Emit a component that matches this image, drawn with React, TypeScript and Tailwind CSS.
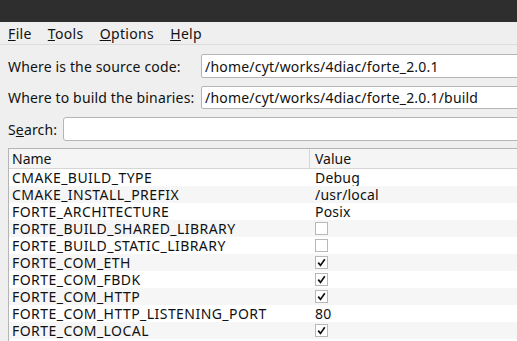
import React from "react";

const rows: { name: string; value: string | boolean }[] = [
  { name: "CMAKE_BUILD_TYPE", value: "Debug" },
  { name: "CMAKE_INSTALL_PREFIX", value: "/usr/local" },
  { name: "FORTE_ARCHITECTURE", value: "Posix" },
  { name: "FORTE_BUILD_SHARED_LIBRARY", value: false },
  { name: "FORTE_BUILD_STATIC_LIBRARY", value: false },
  { name: "FORTE_COM_ETH", value: true },
  { name: "FORTE_COM_FBDK", value: true },
  { name: "FORTE_COM_HTTP", value: true },
  { name: "FORTE_COM_HTTP_LISTENING_PORT", value: "80" },
  { name: "FORTE_COM_LOCAL", value: true },
  { name: "FORTE_COM_OPC", value: true },
];

function Check({ on }: { on: boolean }) {
  return (
    <div className="w-[13px] h-[13px] border border-[#b8b8b8] bg-white flex items-center justify-center">
      {on && (
        <svg width="9" height="9" viewBox="0 0 9 9">
          <path d="M1.2 4.6 L3.5 7.4 L7.8 1.2" fill="none" stroke="#111" strokeWidth="1.7" />
        </svg>
      )}
    </div>
  );
}

export default function App() {
  return (
    <div
      className="w-[517px] h-[341px] overflow-hidden bg-[#efefef] text-[#111] flex flex-col"
      style={{ fontFamily: '"Noto Sans", "Open Sans", sans-serif' }}
    >
      <div className="h-[22px] bg-[#2e2e2e] shrink-0" />
      <div className="h-[23px] flex items-center gap-[16px] px-[8px] text-[14px] tracking-[0.35px] shrink-0 border-b border-[#dcdcdc]">
        <span><u>F</u>ile</span>
        <span><u>T</u>ools</span>
        <span><u>O</u>ptions</span>
        <span><u>H</u>elp</span>
      </div>
      <div className="flex flex-col pl-[8px] pt-[9px] gap-[8px] text-[14px]">
        <div className="flex items-center h-[24px]">
          <span className="w-[193px] shrink-0 tracking-[0.15px]">Where is the source code:</span>
          <div className="flex-1 h-[24px] bg-white border border-[#b5b5b5] rounded-l-[2px] flex items-center pl-[3px] -mr-[4px] tracking-[0.2px]">
            /home/cyt/works/4diac/forte_2.0.1
          </div>
        </div>
        <div className="flex items-center h-[23px]">
          <span className="w-[193px] shrink-0 tracking-[0.15px]">Where to build the binaries:</span>
          <div className="flex-1 h-[23px] bg-white border border-[#b5b5b5] rounded-l-[2px] flex items-center pl-[3px] -mr-[4px] tracking-[0.2px]">
            /home/cyt/works/4diac/forte_2.0.1/build
          </div>
        </div>
        <div className="flex items-center h-[24px]">
          <span className="w-[55px] shrink-0 tracking-[0.15px]">S<u>e</u>arch:</span>
          <div className="flex-1 h-[24px] bg-white border border-[#b5b5b5] rounded-l-[3px] -mr-[4px]" />
        </div>
      </div>
      <div className="ml-[8px] mt-[7px] border-l border-t border-[#b5b5b5] bg-white flex flex-col text-[14px]">
        <div className="flex h-[20px] bg-[#f5f5f5] border-b border-[#d5d5d5] shrink-0">
          <div className="w-[301px] pl-[3px] border-r border-[#d5d5d5] flex items-center">Name</div>
          <div className="flex-1 pl-[5px] flex items-center">Value</div>
        </div>
        {rows.map((r, i) => (
          <div key={r.name} className={`flex h-[17px] shrink-0 overflow-hidden leading-[17px] ${i % 2 === 1 ? "bg-[#f6f6f6]" : "bg-white"}`}>
            <div className="w-[302px] pl-[3px] flex items-center tracking-[0.45px]">{r.name}</div>
            <div className="flex-1 pl-[4px] flex items-center tracking-[0.2px]">
              {typeof r.value === "boolean" ? <Check on={r.value} /> : r.value}
            </div>
          </div>
        ))}
      </div>
    </div>
  );
}
